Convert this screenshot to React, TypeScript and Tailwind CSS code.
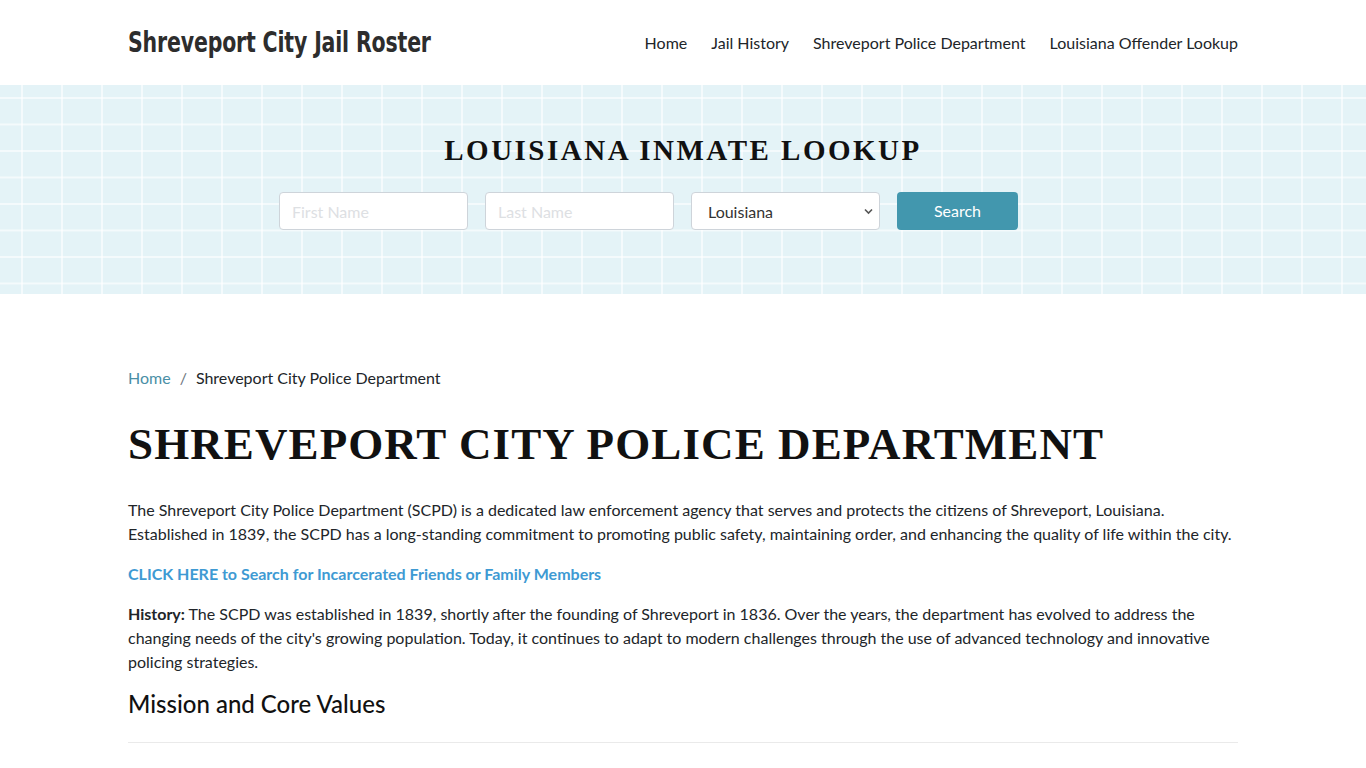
import React from "react";

export default function App() {
  return (
    <div className="min-h-screen bg-white font-['Lato','Noto_Sans',sans-serif] text-[#212529]">
      <header className="h-[85px]">
        <div className="mx-auto flex h-full w-[1110px] items-center justify-between">
          <div className="w-[303px] mt-[1px]">
            <span className="inline-block origin-left scale-x-[0.785] whitespace-nowrap font-['DejaVu_Sans_Condensed','DejaVu_Sans',sans-serif] font-stretch-condensed text-[29px] font-bold text-[#2d2d2d] tracking-[-0.2px]">
              Shreveport City Jail Roster
            </span>
          </div>
          <nav className="flex items-center gap-[24px] text-[16px] text-[#212529] mt-[1px]">
            <a>Home</a>
            <a>Jail History</a>
            <a>Shreveport Police Department</a>
            <a>Louisiana Offender Lookup</a>
          </nav>
        </div>
      </header>

      <section className="h-[209px] bg-[#e4f3f7] bg-[linear-gradient(to_right,rgba(255,255,255,0.6)_2px,transparent_2px),linear-gradient(to_bottom,rgba(255,255,255,0.6)_2px,transparent_2px)] bg-[length:40px_26.5px] bg-[position:21px_12px]">
        <div className="flex flex-col items-center pt-[48px]">
          <h2 className="font-['Liberation_Serif','DejaVu_Serif',serif] text-[29px] font-bold leading-[34px] tracking-[2.5px] text-[#111]">
            LOUISIANA INMATE LOOKUP
          </h2>
          <div className="mt-[25px] mr-[69px] flex items-center gap-[17px]">
            <input
              placeholder="First Name"
              className="h-[38px] w-[189px] rounded-[4px] border border-[#ced4da] bg-white px-3 text-[16px] placeholder:text-[#dde0e3] outline-none"
            />
            <input
              placeholder="Last Name"
              className="h-[38px] w-[189px] rounded-[4px] border border-[#ced4da] bg-white px-3 text-[16px] placeholder:text-[#dde0e3] outline-none"
            />
            <div className="relative h-[38px] w-[189px] rounded-[4px] border border-[#ced4da] bg-white">
              <span className="absolute left-[16px] top-[7px] text-[16px] text-[#333]">Louisiana</span>
              <svg className="absolute right-[6px] top-[15px]" width="9" height="7" viewBox="0 0 9 7">
                <path d="M1 1.5 L4.5 5 L8 1.5" fill="none" stroke="#555" strokeWidth="1.6" />
              </svg>
            </div>
            <button className="h-[38px] w-[121px] rounded-[4px] bg-[#4297ae] text-[16px] text-white">
              Search
            </button>
          </div>
        </div>
      </section>

      <main className="mx-auto w-[1110px] pt-[72px]">
        <div className="flex items-center text-[16px] leading-[24px]">
          <a className="text-[#4a8fa6]">Home</a>
          <span className="px-[9px] text-[#6c757d]">/</span>
          <span className="text-[#212529]">Shreveport City Police Department</span>
        </div>
        <h1 className="mt-[29px] font-['Liberation_Serif','DejaVu_Serif',serif] text-[45px] font-bold leading-[50px] tracking-[1.1px] text-[#111]">
          SHREVEPORT CITY POLICE DEPARTMENT
        </h1>
        <p className="mt-[29px] text-[16px] leading-[24px]">
          The Shreveport City Police Department (SCPD) is a dedicated law enforcement agency that serves and protects the citizens of Shreveport, Louisiana. Established in 1839, the SCPD has a long-standing commitment to promoting public safety, maintaining order, and enhancing the quality of life within the city.
        </p>
        <p className="mt-[16px] text-[16px] leading-[24px] font-bold text-[#3e9ad3]">
          CLICK HERE to Search for Incarcerated Friends or Family Members
        </p>
        <p className="mt-[16px] text-[16px] leading-[24px]">
          <span className="font-bold">History:</span> The SCPD was established in 1839, shortly after the founding of Shreveport in 1836. Over the years, the department has evolved to address the changing needs of the city's growing population. Today, it continues to adapt to modern challenges through the use of advanced technology and innovative policing strategies.
        </p>
        <h2 className="mt-[14px] text-[24px] font-medium leading-[32px] text-[#111]">Mission and Core Values</h2>
        <hr className="mt-[22px] border-t border-[#eaeaea]" />
      </main>
    </div>
  );
}
